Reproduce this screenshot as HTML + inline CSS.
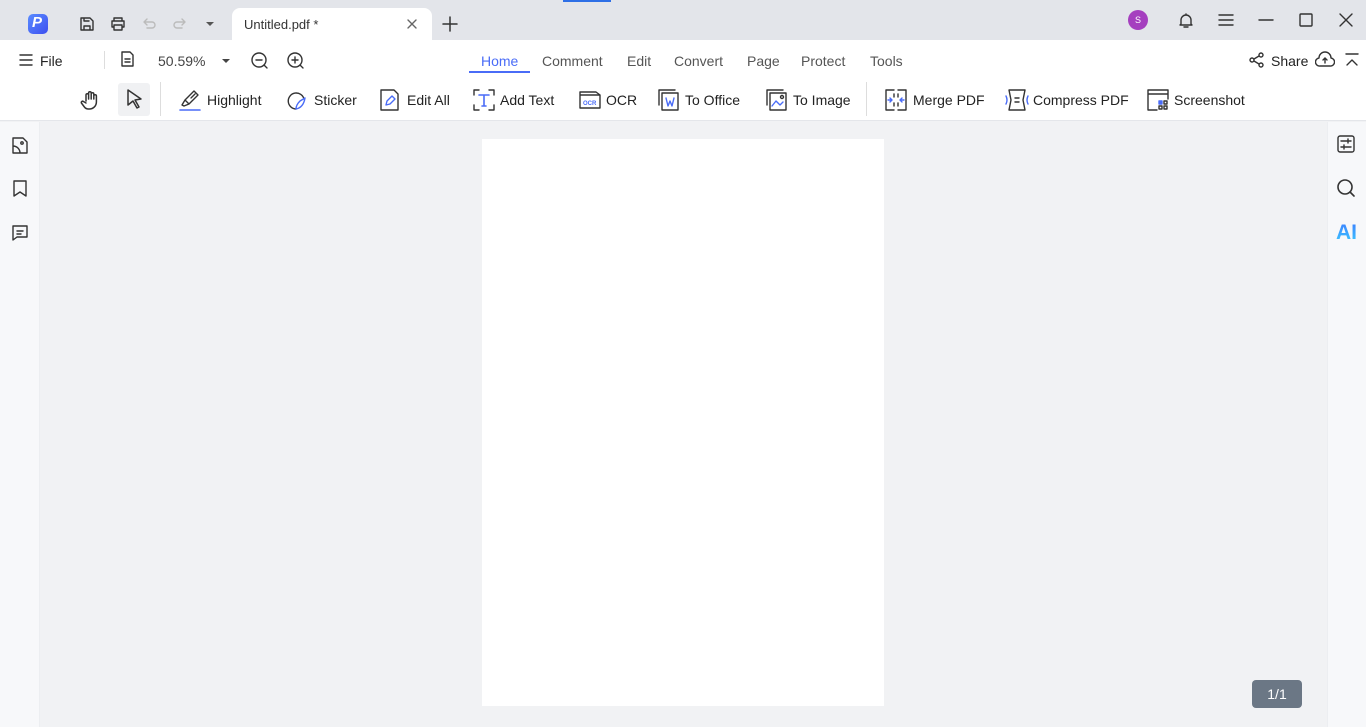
<!DOCTYPE html>
<html><head><meta charset="utf-8"><style>
*{margin:0;padding:0;box-sizing:border-box}
body{width:1366px;height:727px;overflow:hidden;font-family:"Liberation Sans",sans-serif;color:#222;background:#f1f2f4;position:relative}
.abs{position:absolute}
svg{position:absolute;fill:none;stroke:#333;stroke-width:1.4;stroke-linecap:round;stroke-linejoin:round}
.t{position:absolute;font-size:14px;white-space:nowrap}
</style></head><body>
<!-- title bar -->
<div class="abs" style="left:0;top:0;width:1366px;height:40px;background:#e3e5ea"></div>
<div class="abs" style="left:563px;top:0;width:48px;height:2px;background:#2e6fe6"></div>
<div class="abs" style="left:28px;top:14px;width:20px;height:20px;border-radius:5px;background:linear-gradient(135deg,#5a8cff,#3d4ff0)"></div>
<div class="t" style="left:32px;top:14px;color:#fff;font-size:15px;font-weight:bold;font-style:italic">P</div>
<svg style="left:79px;top:16px" width="16" height="16"><path d="M2 2h9l3 3v9H2z M5 14v-4h6v4 M5 2v3h5"/></svg>
<svg style="left:110px;top:16px" width="16" height="16"><path d="M4 5V2h8v3 M2 5h12v6h-2 M4 11H2V5 M4 9h8v5H4z"/></svg>
<svg style="left:141px;top:16px;stroke:#bbb" width="16" height="16"><path d="M4 6h7a3 3 0 010 6H6 M6 3L3 6l3 3"/></svg>
<svg style="left:172px;top:16px;stroke:#bbb" width="16" height="16"><path d="M12 6H5a3 3 0 000 6h5 M10 3l3 3-3 3"/></svg>
<div class="abs" style="left:206px;top:22px;border:4px solid transparent;border-top:4px solid #555;border-bottom:0"></div>
<div class="abs" style="left:232px;top:8px;width:200px;height:32px;background:#fff;border-radius:8px 8px 0 0"></div>
<div class="t" style="left:244px;top:17px;font-size:13px;color:#333">Untitled.pdf *</div>
<svg style="left:406px;top:18px;stroke:#666" width="12" height="12"><path d="M2 2l8 8M10 2l-8 8"/></svg>
<svg style="left:441px;top:15px;stroke-width:1.5" width="18" height="18"><path d="M9 2v14M2 9h14"/></svg>
<div class="abs" style="left:1128px;top:10px;width:20px;height:20px;border-radius:50%;background:#a53fbf;color:#fff;font-size:9px;text-align:center;line-height:20px">S</div>
<svg style="left:1178px;top:12px" width="16" height="17"><path d="M3 12V8a5 5 0 0110 0v4l1 1H2z M6 15h4 M8 2v1"/></svg>
<svg style="left:1218px;top:13px" width="16" height="14"><path d="M1 2h14M1 7h14M1 12h14"/></svg>
<svg style="left:1258px;top:13px" width="16" height="14"><path d="M1 7h14"/></svg>
<svg style="left:1299px;top:13px" width="14" height="14"><rect x="1" y="1" width="12" height="12" rx="1"/></svg>
<svg style="left:1339px;top:13px" width="14" height="14"><path d="M1 1l12 12M13 1L1 13"/></svg>
<!-- toolbar -->
<div class="abs" style="left:0;top:40px;width:1366px;height:81px;background:#fff;border-bottom:1px solid #e4e6ea"></div>
<svg style="left:19px;top:53px" width="14" height="14"><path d="M1 2h12M1 7h12M1 12h12"/></svg>
<div class="t" style="left:40px;top:53px">File</div>
<div class="abs" style="left:104px;top:51px;width:1px;height:18px;background:#ddd"></div>
<svg style="left:120px;top:51px" width="16" height="18"><path d="M2 1h8l3 3v11H2z M5 8h5M5 11h5"/></svg>
<div class="t" style="left:158px;top:53px;color:#444">50.59%</div>
<div class="abs" style="left:222px;top:59px;border:4px solid transparent;border-top:4px solid #444;border-bottom:0"></div>
<svg style="left:250px;top:51px" width="19" height="19"><circle cx="9" cy="9" r="7"/><path d="M6 9h6M14 14l3 3"/></svg>
<svg style="left:286px;top:51px" width="19" height="19"><circle cx="9" cy="9" r="7"/><path d="M6 9h6M9 6v6M14 14l3 3"/></svg>
<div class="t" style="left:481px;top:53px;color:#4a6cf7">Home</div>
<div class="abs" style="left:469px;top:71px;width:61px;height:2px;background:#4a6cf7"></div>
<div class="t" style="left:542px;top:53px;color:#555">Comment</div>
<div class="t" style="left:627px;top:53px;color:#555">Edit</div>
<div class="t" style="left:674px;top:53px;color:#555">Convert</div>
<div class="t" style="left:747px;top:53px;color:#555">Page</div>
<div class="t" style="left:801px;top:53px;color:#555">Protect</div>
<div class="t" style="left:870px;top:53px;color:#555">Tools</div>
<svg style="left:1249px;top:52px" width="16" height="16"><circle cx="3" cy="8" r="2"/><circle cx="12" cy="3" r="2"/><circle cx="12" cy="13" r="2"/><path d="M5 7l5-3M5 9l5 3"/></svg>
<div class="t" style="left:1271px;top:53px">Share</div>
<svg style="left:1315px;top:51px" width="20" height="18"><path d="M5 15a4 4 0 01-1-8 6 6 0 0112 0 4 4 0 01-1 8z M10 12V7M8 9l2-2 2 2"/></svg>
<svg style="left:1344px;top:52px" width="16" height="16"><path d="M2 2h12M3 13l5-5 5 5"/></svg>
<!-- row 2 -->
<svg style="left:80px;top:89px;stroke-width:1.5" width="22" height="22"><path d="M6 12V6a1.3 1.3 0 012.6 0V10 M8.6 10V4a1.3 1.3 0 012.6 0v6 M11.2 10V5a1.3 1.3 0 012.6 0v5 M13.8 10V7a1.3 1.3 0 012.6 0v6a7 7 0 01-7 7h-1a5 5 0 01-4-2l-3-4a1.3 1.3 0 012-1.5L6 14"/></svg>
<div class="abs" style="left:118px;top:83px;width:32px;height:33px;background:#f0f1f3;border-radius:3px"></div>
<svg style="left:125px;top:88px;stroke-width:1.5" width="20" height="22"><path d="M3 2l13 9-6 1 4 7-2 1-4-7-5 4z"/></svg>
<div class="abs" style="left:160px;top:82px;width:1px;height:34px;background:#ddd"></div>
<svg style="left:178px;top:88px" width="24" height="24"><path d="M4 17l3-5 9-9 4 4-9 9-5 2z M7 12l4 4 M13 10l4-4"/><path d="M2 22h20" style="stroke:#4a6cf7;stroke-width:1.6"/></svg>
<div class="t" style="left:207px;top:92px">Highlight</div>
<svg style="left:285px;top:88px" width="24" height="24"><path d="M19 11a8 8 0 10-8 10"/><path d="M11 21c5-1 8-5 9-11l-5 3c-2 2-4 5-4 8" style="stroke:#4a6cf7"/></svg>
<div class="t" style="left:314px;top:92px">Sticker</div>
<svg style="left:379px;top:88px" width="22" height="24"><path d="M2 2h13l4 4v16H2z"/><path d="M7 17l1-4 5-5 3 3-5 5z" style="stroke:#4a6cf7"/></svg>
<div class="t" style="left:407px;top:92px">Edit All</div>
<svg style="left:472px;top:88px" width="24" height="24"><path d="M2 7V2h5M17 2h5v5M22 17v5h-5M7 22H2v-5"/><path d="M7 7h10M12 7v11M10 18h4" style="stroke:#4a6cf7;stroke-width:1.6"/></svg>
<div class="t" style="left:500px;top:92px">Add Text</div>
<svg style="left:578px;top:89px" width="24" height="22"><path d="M2 6V3h16l4 3 M2 6h20v13H2z"/><text x="5" y="16" font-size="6" font-family="Liberation Sans" fill="#4a6cf7" stroke="none" font-weight="bold">OCR</text></svg>
<div class="t" style="left:606px;top:92px">OCR</div>
<svg style="left:657px;top:88px" width="24" height="24"><path d="M2 17V2h16 M5 5h16v17H5z"/><path d="M9 10l2 8 2-5 2 5 2-8" style="stroke:#4a6cf7"/></svg>
<div class="t" style="left:685px;top:92px">To Office</div>
<svg style="left:765px;top:88px" width="24" height="24"><path d="M2 17V2h16 M5 5h16v17H5z"/><path d="M7 18l4-5 4 4 3-3" style="stroke:#4a6cf7"/><circle cx="17" cy="9" r="1.5"/></svg>
<div class="t" style="left:793px;top:92px">To Image</div>
<div class="abs" style="left:866px;top:82px;width:1px;height:34px;background:#ddd"></div>
<svg style="left:884px;top:88px" width="24" height="24"><path d="M10 2H2v20h8 M14 2h8v20h-8 M10 6v3M10 15v3M14 6v3M14 15v3"/><path d="M4 12h4M6 10l2 2-2 2M20 12h-4M18 10l-2 2 2 2" style="stroke:#4a6cf7"/></svg>
<div class="t" style="left:913px;top:92px">Merge PDF</div>
<svg style="left:1005px;top:88px" width="24" height="24"><path d="M4 2h16l-2 10 2 10H4l2-10z M10 10h4M10 14h4"/><path d="M1 8q2 4 0 8M23 8q-2 4 0 8" style="stroke:#4a6cf7"/></svg>
<div class="t" style="left:1033px;top:92px">Compress PDF</div>
<svg style="left:1146px;top:88px" width="24" height="24"><path d="M22 11V2H2v20h9 M2 6h20"/><rect x="13" y="13" width="3" height="3" style="fill:#4a6cf7;stroke:#4a6cf7"/><rect x="18" y="13" width="3" height="3"/><rect x="13" y="18" width="3" height="3"/><rect x="18" y="18" width="3" height="3"/></svg>
<div class="t" style="left:1174px;top:92px">Screenshot</div>
<!-- sidebars -->
<div class="abs" style="left:0;top:122px;width:40px;height:605px;background:#f7f8fa;border-right:1px solid #eceef1"></div>
<svg style="left:11px;top:136px" width="18" height="19"><path d="M2 2h10l4 4v11H2z M2 10a7 7 0 017 7"/><circle cx="11" cy="7" r="1.2"/></svg>
<svg style="left:12px;top:179px" width="16" height="19"><path d="M2 2h12v15l-6-4-6 4z"/></svg>
<svg style="left:11px;top:224px" width="18" height="17"><path d="M2 2h14v11H6l-4 3z M6 7h6M6 10h4"/></svg>
<div class="abs" style="left:1327px;top:122px;width:39px;height:605px;background:#f7f8fa;border-left:1px solid #eceef1"></div>
<svg style="left:1337px;top:135px" width="18" height="18"><rect x="1" y="1" width="16" height="16" rx="2"/><path d="M4 6h10M4 12h10M11 4v4M7 10v4"/></svg>
<svg style="left:1337px;top:179px;stroke-width:1.6" width="19" height="19"><circle cx="8" cy="8" r="7"/><path d="M13 13l4 4"/></svg>
<div class="t" style="left:1336px;top:221px;font-size:21px;font-weight:bold;color:#3ea0ff;background:linear-gradient(#3a7bff,#3ed0ff);-webkit-background-clip:text;color:transparent">AI</div>
<!-- page -->
<div class="abs" style="left:482px;top:139px;width:402px;height:567px;background:#fff"></div>
<div class="abs" style="left:1252px;top:680px;width:50px;height:28px;background:#6b7785;border-radius:4px;color:#fff;font-size:14px;text-align:center;line-height:28px">1/1</div>
</body></html>
